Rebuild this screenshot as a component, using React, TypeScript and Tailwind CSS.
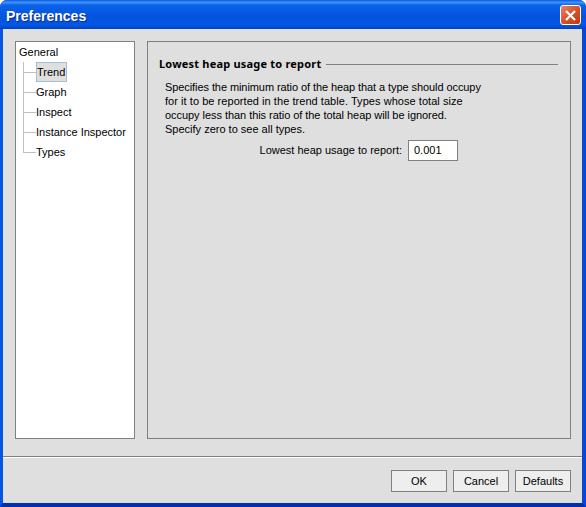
const font = "[font-family:'Liberation_Sans',sans-serif]";

function Btn({ label }: { label: string }) {
  return (
    <div className="w-[56px] h-[22px] border border-[#808080] bg-[#eeeeee] flex items-center justify-center text-[11px] text-black">
      {label}
    </div>
  );
}

function TreeLines() {
  return (
    <svg width="14" height="100" className="shrink-0" shapeRendering="crispEdges">
      <path d="M0.5 0V91M0.5 10.5H13M0.5 30.5H13M0.5 50.5H13M0.5 70.5H13M0.5 90.5H13" stroke="#c0c0c0" strokeWidth="1" fill="none" />
    </svg>
  );
}

function CloseButton() {
  return (
    <div className="w-[21px] h-[20px] mt-[1px] rounded-[3px] border border-white bg-gradient-to-br from-[#e8825f] via-[#d9522a] to-[#b93a14] flex items-center justify-center">
      <svg width="13" height="13" viewBox="0 0 13 13">
        <path d="M2 2L11 11M11 2L2 11" stroke="#ffffff" strokeWidth="2.2" fill="none" />
      </svg>
    </div>
  );
}

export default function App() {
  return (
    <div className={`w-[586px] h-[507px] flex flex-col overflow-hidden rounded-t-[7px] bg-[#0a3fd0] ${font} text-[11px] text-black`}>
      <div className="h-[29px] shrink-0 flex items-center justify-between pl-[6px] pr-[5px] bg-[linear-gradient(180deg,#0a58e0_0%,#3f94fb_8%,#0a62ea_18%,#0353dd_60%,#0357e6_85%,#0343c0_100%)]">
        <span className="text-[14px] font-bold text-white [text-shadow:1px_1px_0_#0a2a90] mt-[3px]">Preferences</span>
        <CloseButton />
      </div>
      <div className="flex-1 flex flex-col min-h-0 border-l-[3px] border-l-[#0855e0] border-r-[4px] border-r-[#0848d0] border-b-[4px] border-b-[#0030b0] bg-[#dfdfdf]">
        <div className="flex gap-[12px] pt-[12px] pl-[12px] pr-[11px]">
          <div className="w-[120px] h-[398px] border border-[#808080] bg-white pl-[3px]">
            <div className="h-[20px] leading-[20px]">General</div>
            <div className="flex pl-[4px]">
              <TreeLines />
              <div className="flex flex-col -ml-[1px]">
                <div className="h-[20px] flex items-center">
                  <span className="w-[31px] h-[20px] leading-[18px] bg-[#dfdfdf] border border-[#a3bcd8]">Trend</span>
                </div>
                <div className="h-[20px] leading-[20px]">Graph</div>
                <div className="h-[20px] leading-[20px]">Inspect</div>
                <div className="h-[20px] leading-[20px]">Instance Inspector</div>
                <div className="h-[20px] leading-[20px]">Types</div>
              </div>
            </div>
          </div>
          <div className="w-[424px] h-[398px] border border-[#808080] pt-[14px] pl-[11px] pr-[12px]">
            <div className="flex items-center gap-[5px] h-[16px]">
              <span className="font-bold whitespace-nowrap [font-family:'Noto_Sans',sans-serif] tracking-[0.2px]">Lowest heap usage to report</span>
              <div className="flex-1 h-px bg-[#808080]"></div>
            </div>
            <div className="pl-[6px] pt-[8px] w-[320px] whitespace-nowrap">
              <div className="h-[14px] leading-[14px] tracking-[-0.08px]">Specifies the minimum ratio of the heap that a type should occupy</div>
              <div className="h-[14px] leading-[14px] tracking-[0.05px]">for it to be reported in the trend table. Types whose total size</div>
              <div className="h-[14px] leading-[14px] tracking-[-0.05px]">occupy less than this ratio of the total heap will be ignored.</div>
              <div className="h-[14px] leading-[14px]">Specify zero to see all types.</div>
            </div>
            <div className="flex items-center justify-end gap-[6px] w-[299px] mt-[4px]">
              <span>Lowest heap usage to report:</span>
              <div className="w-[50px] h-[21px] border border-[#808080] bg-white pl-[5px] leading-[19px]">0.001</div>
            </div>
          </div>
        </div>
        <div className="mt-[17px] h-[2px] border-t border-t-[#808080] border-b border-b-white"></div>
        <div className="flex justify-end gap-[6px] pt-[12px] pr-[11px]">
          <Btn label="OK" />
          <Btn label="Cancel" />
          <Btn label="Defaults" />
        </div>
      </div>
    </div>
  );
}
